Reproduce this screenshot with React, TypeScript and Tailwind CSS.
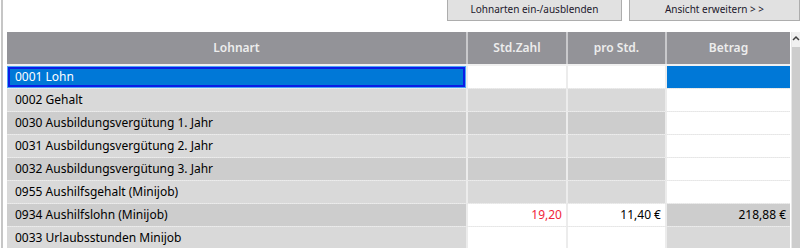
import React from "react";

type Row = {
  label: string;
  std?: string;
  pro?: string;
  betrag?: string;
  dark: boolean;
  inputs: boolean;
  betragWhite: boolean;
  selected?: boolean;
};

const rows: Row[] = [
  { label: "0001 Lohn", dark: false, inputs: true, betragWhite: false, selected: true },
  { label: "0002 Gehalt", dark: false, inputs: false, betragWhite: true },
  { label: "0030 Ausbildungsvergütung 1. Jahr", dark: true, inputs: false, betragWhite: true },
  { label: "0031 Ausbildungsvergütung 2. Jahr", dark: false, inputs: false, betragWhite: true },
  { label: "0032 Ausbildungsvergütung 3. Jahr", dark: true, inputs: false, betragWhite: true },
  { label: "0955 Aushilfsgehalt (Minijob)", dark: false, inputs: false, betragWhite: true },
  {
    label: "0934 Aushilfslohn (Minijob)",
    std: "19,20",
    pro: "11,40 €",
    betrag: "218,88 €",
    dark: true,
    inputs: true,
    betragWhite: false,
  },
  { label: "0033 Urlaubsstunden Minijob", dark: false, inputs: true, betragWhite: false },
];

function ToolbarButton({ label, width }: { label: string; width: string }) {
  return (
    <button
      className={`${width} h-[21px] bg-[#e1e1e1] border border-t-0 border-[#adadad] text-[10px] text-[#22182c] leading-none pb-[2px]`}
    >
      {label}
    </button>
  );
}

export default function App() {
  return (
    <div className="w-[800px] h-[248px] overflow-hidden bg-white font-['Segoe_UI','Noto_Sans',sans-serif]">
      <div className="ml-px h-full border-l-2 border-[#c6c6c6] pl-[4px] flex flex-col">
        {/* Toolbar */}
        <div className="h-[32px] shrink-0 flex items-start justify-end gap-[7px]">
          <ToolbarButton label="Lohnarten ein-/ausblenden" width="w-[175px]" />
          <ToolbarButton label="Ansicht erweitern > >" width="w-[171px]" />
        </div>

        <div className="flex shrink-0">
          {/* Grid */}
          <div className="w-[783px] flex flex-col bg-[#ececec]">
            <div className="h-[32px] grid grid-cols-[459px_98px_97px_123px] gap-x-[2px] bg-[#c9c9cc] text-[12px] font-semibold text-[#ededed]">
              <div className="bg-[#939398] flex items-center justify-center">Lohnart</div>
              <div className="bg-[#939398] flex items-center justify-center">Std.Zahl</div>
              <div className="bg-[#939398] flex items-center justify-center">pro Std.</div>
              <div className="bg-[#939398] flex items-center justify-center">Betrag</div>
            </div>
            <div className="h-[2px] bg-[#f0f0f0]" />
            {rows.map((r) => {
              const bg = r.dark ? "bg-[#cdcdcd]" : "bg-[#d9d9d9]";
              const inputBg = r.inputs ? "bg-white" : bg;
              const betragBg = r.selected
                ? "bg-[#0078d7]"
                : r.betragWhite
                  ? "bg-white"
                  : bg;
              return (
                <div
                  key={r.label}
                  className="h-[23px] grid grid-cols-[459px_98px_97px_123px] gap-x-[2px] border-b border-dotted border-[#e6e6e6] text-[12px] text-black"
                >
                  {r.selected ? (
                    <div className="bg-[#0078d7] text-white flex items-center pl-[8px] shadow-[inset_0_0_0_1px_#4aa3f5,inset_0_0_0_3px_#0b1de6]">
                      {r.label}
                    </div>
                  ) : (
                    <div className={`${bg} flex items-center pl-[8px]`}>{r.label}</div>
                  )}
                  <div className={`${inputBg} flex items-center justify-end pr-[4px] text-[#f0263a]`}>
                    {r.std}
                  </div>
                  <div className={`${inputBg} flex items-center justify-end pr-[4px]`}>{r.pro}</div>
                  <div className={`${betragBg} flex items-center justify-end pr-[4px]`}>{r.betrag}</div>
                </div>
              );
            })}
          </div>

          {/* Scrollbar */}
          <div className="ml-px w-[10px] flex flex-col border-l border-[#e8e8e8]">
            <div className="h-[15px] bg-[#f0f0f0] flex items-start justify-center pt-[3px]">
              <svg width="8" height="6" viewBox="0 0 8 6">
                <path d="M1 5 L4 2 L7 5" fill="none" stroke="#404040" strokeWidth="1.5" />
              </svg>
            </div>
            <div className="flex-1 bg-[#cdcdcd]" />
          </div>
        </div>
      </div>
    </div>
  );
}
